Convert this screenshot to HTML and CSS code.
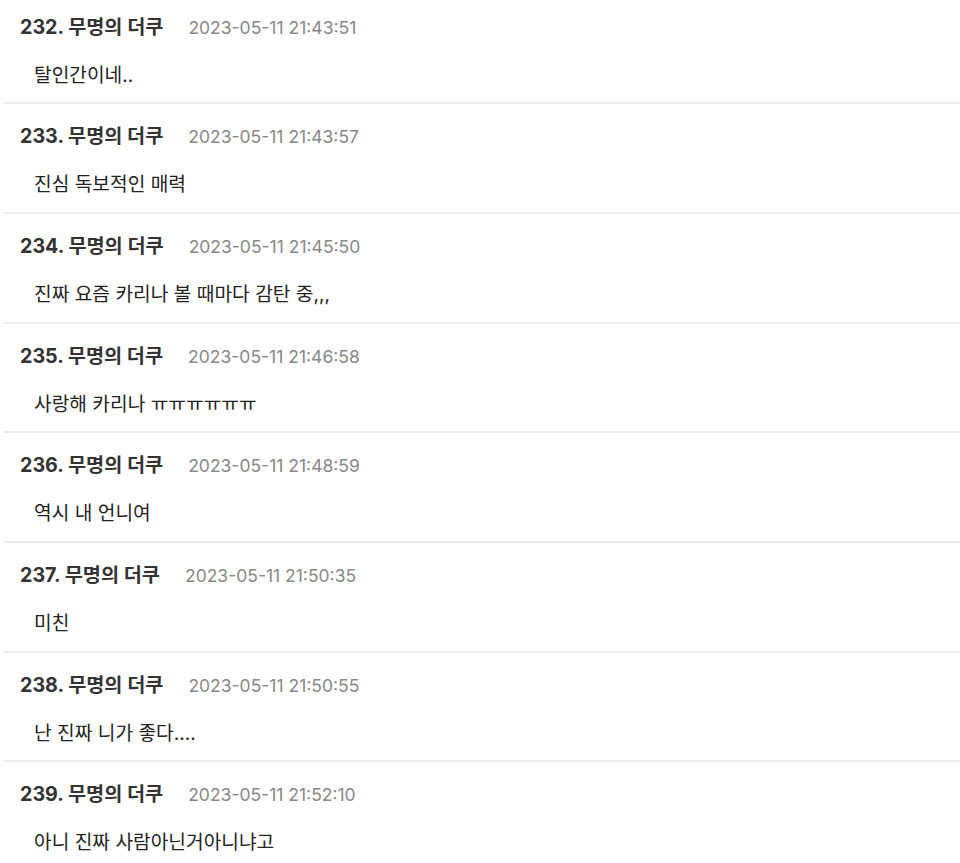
FILE: index.html
```html
<!DOCTYPE html>
<html lang="ko">
<head>
<meta charset="utf-8">
<link rel="stylesheet" href="styles.css">
</head>
<body>
<ul class="comments">
  <li class="comment first">
    <div class="meta"><span class="author">232. 무명의 더쿠</span><span class="date">2023-05-11 21:43:51</span></div>
    <div class="text">탈인간이네..</div>
  </li>
  <li class="comment">
    <div class="meta"><span class="author">233. 무명의 더쿠</span><span class="date">2023-05-11 21:43:57</span></div>
    <div class="text">진심 독보적인 매력</div>
  </li>
  <li class="comment">
    <div class="meta"><span class="author">234. 무명의 더쿠</span><span class="date">2023-05-11 21:45:50</span></div>
    <div class="text">진짜 요즘 카리나 볼 때마다 감탄 중,,,</div>
  </li>
  <li class="comment">
    <div class="meta"><span class="author">235. 무명의 더쿠</span><span class="date">2023-05-11 21:46:58</span></div>
    <div class="text">사랑해 카리나 ㅠㅠㅠㅠㅠㅠ</div>
  </li>
  <li class="comment">
    <div class="meta"><span class="author">236. 무명의 더쿠</span><span class="date">2023-05-11 21:48:59</span></div>
    <div class="text">역시 내 언니여</div>
  </li>
  <li class="comment">
    <div class="meta"><span class="author">237. 무명의 더쿠</span><span class="date">2023-05-11 21:50:35</span></div>
    <div class="text">미친</div>
  </li>
  <li class="comment">
    <div class="meta"><span class="author">238. 무명의 더쿠</span><span class="date">2023-05-11 21:50:55</span></div>
    <div class="text">난 진짜 니가 좋다....</div>
  </li>
  <li class="comment">
    <div class="meta"><span class="author">239. 무명의 더쿠</span><span class="date">2023-05-11 21:52:10</span></div>
    <div class="text">아니 진짜 사람아닌거아니냐고</div>
  </li>
</ul>
</body>
</html>
```

FILE: styles.css
```css
html, body {
  margin: 0;
  padding: 0;
  background: #ffffff;
}
body {
  font-family: "Inter", "Noto Sans CJK KR", sans-serif;
  color: #222222;
  overflow: hidden;
}
.comments {
  list-style: none;
  margin: 0 0 0 4px;
  padding: 0;
}
.comment {
  padding: 20px 0 14.7px 16px;
  border-bottom: 2px solid #ececec;
}
.comment.first {
  padding-top: 14.5px;
}
.meta {
  display: flex;
  align-items: baseline;
  gap: 25px;
  height: 24px;
  line-height: 24px;
}
.author {
  font-weight: 700;
  font-size: 19.7px;
  color: #333333;
}
.date {
  font-size: 17.5px;
  color: #888888;
}
.text {
  margin-top: 23px;
  padding-left: 14px;
  font-size: 19.2px;
  line-height: 26px;
  height: 26px;
  color: #222222;
}
```
